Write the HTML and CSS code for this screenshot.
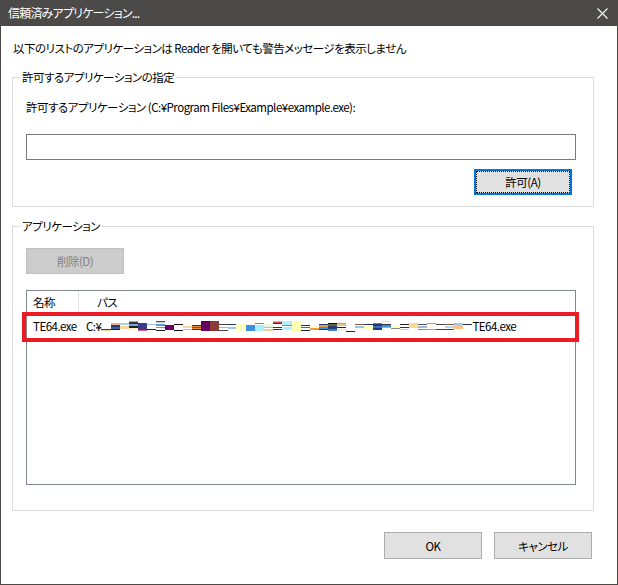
FILE: index.html
```html
<!DOCTYPE html>
<html lang="ja">
<head>
    <meta charset="UTF-8">
    <title>信頼済みアプリケーション...</title>
    <link rel="stylesheet" href="styles.css">
</head>
<body>
    <div class="window">
        <div class="titlebar">
            <span class="title">信頼済みアプリケーション...</span>
            <svg class="close" width="11" height="11" viewBox="0 0 11 11">
                <path d="M0.5 0.5 L10.5 10.5 M10.5 0.5 L0.5 10.5" stroke="#ffffff" stroke-width="1.1" fill="none"/>
            </svg>
        </div>
        <div class="content">
            <p class="intro">以下のリストのアプリケーションは Reader を開いても警告メッセージを表示しません</p>

            <fieldset class="group group-add">
                <legend>許可するアプリケーションの指定</legend>
                <label class="field-label" for="app-path">許可するアプリケーション (C:¥Program Files¥Example¥example.exe):</label>
                <input id="app-path" class="text-input" type="text">
                <div class="add-row">
                    <button class="btn btn-focus">許可(A)</button>
                </div>
            </fieldset>

            <fieldset class="group group-list">
                <legend>アプリケーション</legend>
                <button class="btn btn-disabled" disabled>削除(D)</button>
                <div class="list">
                    <div class="list-head">
                        <div class="col-name">名称</div>
                        <div class="col-path">パス</div>
                    </div>
                    <div class="list-row">
                        <div class="col-name">TE64.exe</div>
                        <div class="col-path">
                            <span>C:¥</span>
                            <svg class="garble" width="371" height="16" viewBox="0 0 371 16">
                                <rect x="0" y="11" width="10" height="1" fill="#444"/>
                                <rect x="0" y="12" width="10" height="1" fill="#e8d0a0"/>
                                <rect x="10" y="5" width="9" height="2" fill="#f4b183"/>
                                <rect x="10" y="7" width="9" height="2" fill="#1f3b7a"/>
                                <rect x="10" y="9" width="9" height="2" fill="#3a5fa0"/>
                                <rect x="10" y="11" width="9" height="1" fill="#222"/>
                                <rect x="19" y="5" width="9" height="2" fill="#9ed8e8"/>
                                <rect x="19" y="8" width="9" height="3" fill="#fcd5a0"/>
                                <rect x="28" y="3" width="9" height="1" fill="#e0a060"/>
                                <rect x="28" y="4" width="9" height="2" fill="#333"/>
                                <rect x="28" y="6" width="9" height="2" fill="#6fa8dc"/>
                                <rect x="28" y="8" width="9" height="2" fill="#222"/>
                                <rect x="28" y="10" width="9" height="2" fill="#fff0c0"/>
                                <rect x="37" y="5" width="9" height="7" fill="#3b3b8c"/>
                                <rect x="37" y="12" width="9" height="1" fill="#e06080"/>
                                <rect x="46" y="6" width="9" height="1" fill="#9ec6e8"/>
                                <rect x="46" y="11" width="9" height="1" fill="#222"/>
                                <rect x="55" y="3" width="9" height="1" fill="#4a5a2a"/>
                                <rect x="55" y="4" width="9" height="1" fill="#ccc"/>
                                <rect x="55" y="6" width="9" height="2" fill="#5b9bd5"/>
                                <rect x="55" y="9" width="9" height="1" fill="#5b9bd5"/>
                                <rect x="55" y="12" width="9" height="1" fill="#222"/>
                                <rect x="64" y="7" width="9" height="5" fill="#660066"/>
                                <rect x="73" y="6" width="9" height="1" fill="#111"/>
                                <rect x="73" y="12" width="9" height="1" fill="#111"/>
                                <rect x="82" y="8" width="9" height="2" fill="#fcd5a0"/>
                                <rect x="82" y="11" width="9" height="1" fill="#f4b183"/>
                                <rect x="91" y="7" width="9" height="1" fill="#333"/>
                                <rect x="91" y="8" width="9" height="1" fill="#e69138"/>
                                <rect x="91" y="9" width="9" height="1" fill="#7f6000"/>
                                <rect x="91" y="10" width="9" height="1" fill="#e69138"/>
                                <rect x="91" y="11" width="9" height="1" fill="#333"/>
                                <rect x="100" y="3" width="9" height="1" fill="#330066"/>
                                <rect x="100" y="4" width="9" height="9" fill="#660066"/>
                                <rect x="109" y="3" width="9" height="10" fill="#8b3a3a"/>
                                <rect x="118" y="6" width="9" height="1" fill="#444"/>
                                <rect x="118" y="9" width="9" height="1" fill="#a0b8e0"/>
                                <rect x="118" y="12" width="9" height="1" fill="#444"/>
                                <rect x="127" y="6" width="8" height="1" fill="#1f3b7a"/>
                                <rect x="127" y="9" width="8" height="2" fill="#9ec6e8"/>
                                <rect x="135" y="5" width="10" height="8" fill="#ffffc0"/>
                                <rect x="145" y="7" width="9" height="6" fill="#3d8fe0"/>
                                <rect x="154" y="5" width="9" height="1" fill="#8a8a6a"/>
                                <rect x="154" y="7" width="9" height="6" fill="#a8f0ff"/>
                                <rect x="163" y="6" width="9" height="3" fill="#e8f8e0"/>
                                <rect x="163" y="9" width="9" height="1" fill="#f4b183"/>
                                <rect x="163" y="11" width="9" height="2" fill="#f9cb9c"/>
                                <rect x="172" y="3" width="9" height="1" fill="#f4b183"/>
                                <rect x="172" y="4" width="9" height="1" fill="#c0504d"/>
                                <rect x="172" y="5" width="9" height="1" fill="#1f3b7a"/>
                                <rect x="172" y="9" width="9" height="1" fill="#333"/>
                                <rect x="172" y="11" width="9" height="1" fill="#333"/>
                                <rect x="181" y="3" width="10" height="4" fill="#b0f0ff"/>
                                <rect x="181" y="7" width="10" height="1" fill="#888"/>
                                <rect x="181" y="9" width="10" height="3" fill="#b0f0ff"/>
                                <rect x="191" y="3" width="9" height="10" fill="#ffffb0"/>
                                <rect x="200" y="7" width="9" height="1" fill="#333"/>
                                <rect x="200" y="9" width="9" height="1" fill="#666"/>
                                <rect x="200" y="12" width="9" height="1" fill="#223"/>
                                <rect x="209" y="7" width="9" height="3" fill="#fffbe0"/>
                                <rect x="209" y="10" width="9" height="2" fill="#f0a030"/>
                                <rect x="218" y="6" width="9" height="1" fill="#1f3b7a"/>
                                <rect x="218" y="7" width="9" height="2" fill="#f0a030"/>
                                <rect x="218" y="9" width="9" height="2" fill="#3d8fe0"/>
                                <rect x="218" y="11" width="9" height="1" fill="#1f3b7a"/>
                                <rect x="227" y="5" width="9" height="1" fill="#111"/>
                                <rect x="227" y="6" width="9" height="2" fill="#5b6b2b"/>
                                <rect x="227" y="8" width="9" height="3" fill="#1f3b7a"/>
                                <rect x="227" y="11" width="9" height="2" fill="#4a7ac0"/>
                                <rect x="236" y="5" width="9" height="1" fill="#d0a060"/>
                                <rect x="236" y="6" width="9" height="2" fill="#e0c890"/>
                                <rect x="236" y="9" width="9" height="1" fill="#222"/>
                                <rect x="236" y="11" width="9" height="1" fill="#f0e0b0"/>
                                <rect x="245" y="13" width="9" height="1" fill="#222"/>
                                <rect x="254" y="6" width="9" height="1" fill="#8b5a3a"/>
                                <rect x="254" y="8" width="9" height="2" fill="#9ec6e8"/>
                                <rect x="254" y="11" width="9" height="1" fill="#fffbe0"/>
                                <rect x="263" y="6" width="9" height="1" fill="#1f2f5a"/>
                                <rect x="263" y="8" width="9" height="3" fill="#ffffc0"/>
                                <rect x="272" y="5" width="9" height="1" fill="#a08040"/>
                                <rect x="272" y="6" width="9" height="2" fill="#1f3b7a"/>
                                <rect x="272" y="8" width="9" height="2" fill="#3d6fb0"/>
                                <rect x="272" y="10" width="9" height="2" fill="#1f3b7a"/>
                                <rect x="281" y="3" width="9" height="1" fill="#b0f0ff"/>
                                <rect x="281" y="6" width="9" height="1" fill="#333"/>
                                <rect x="281" y="7" width="9" height="2" fill="#3d8fe0"/>
                                <rect x="281" y="9" width="9" height="1" fill="#f0a030"/>
                                <rect x="290" y="7" width="9" height="3" fill="#ffffc0"/>
                                <rect x="290" y="10" width="9" height="1" fill="#888"/>
                                <rect x="299" y="6" width="9" height="1" fill="#222"/>
                                <rect x="299" y="9" width="9" height="1" fill="#333"/>
                                <rect x="299" y="11" width="9" height="1" fill="#ccc"/>
                                <rect x="308" y="5" width="9" height="5" fill="#ffd890"/>
                                <rect x="317" y="6" width="9" height="1" fill="#555"/>
                                <rect x="317" y="8" width="9" height="2" fill="#a0b8e0"/>
                                <rect x="317" y="11" width="9" height="1" fill="#888"/>
                                <rect x="326" y="5" width="9" height="1" fill="#e69138"/>
                                <rect x="326" y="7" width="9" height="3" fill="#fffbe0"/>
                                <rect x="326" y="11" width="9" height="1" fill="#e69138"/>
                                <rect x="335" y="6" width="9" height="1" fill="#444"/>
                                <rect x="335" y="11" width="9" height="1" fill="#444"/>
                                <rect x="344" y="6" width="9" height="1" fill="#8b5a3a"/>
                                <rect x="344" y="8" width="9" height="2" fill="#b0d8f0"/>
                                <rect x="344" y="11" width="9" height="1" fill="#444"/>
                                <rect x="353" y="5" width="9" height="2" fill="#9ec6e8"/>
                                <rect x="353" y="7" width="9" height="4" fill="#ffc080"/>
                                <rect x="362" y="6" width="9" height="1" fill="#1f2f5a"/>
                            </svg>
                            <span>TE64.exe</span>
                        </div>
                    </div>
                    <div class="highlight"></div>
                </div>
            </fieldset>

            <div class="footer">
                <button class="btn">OK</button>
                <button class="btn">キャンセル</button>
            </div>
        </div>
    </div>
</body>
</html>
```

FILE: styles.css
```css
body {
    margin: 0;
    font-family: "Noto Sans CJK JP", "Noto Sans", sans-serif;
    font-size: 11.5px;
    letter-spacing: -0.5px;
    font-feature-settings: "palt" 1;
    color: #000;
    background: #fff;
}

.window {
    width: 618px;
    height: 585px;
    box-sizing: border-box;
    border: 1px solid #4b4a48;
    border-top: none;
    background: #fff;
}

.titlebar {
    height: 26px;
    margin: 0 -1px;
    background: #4b4a48;
    color: #fff;
    display: flex;
    align-items: center;
    justify-content: space-between;
    padding: 0 10px 0 8px;
}

.title {
    font-size: 12px;
    letter-spacing: -0.8px;
    line-height: 26px;
}

.content {
    padding: 0 23px 0 11px;
}

.intro {
    margin: 14px 0 0 1px;
    line-height: 16px;
}

.group {
    margin: 0;
    border: 1px solid #dcdcdc;
    padding: 14px 17px 11px 13px;
    min-inline-size: 0;
}

.group legend {
    margin-left: -6px;
    padding: 0 2px;
    line-height: 16px;
}

.group-add {
    margin-top: 13px;
}

.group-list {
    margin-top: 11px;
    padding-bottom: 25px;
}

.field-label {
    display: block;
    line-height: 16px;
}

.text-input {
    display: block;
    width: 100%;
    height: 26px;
    box-sizing: border-box;
    margin: 19px 0 0;
    border: 1px solid #7a7a7a;
    background: #fff;
    font: inherit;
    outline: none;
}

.add-row {
    display: flex;
    justify-content: flex-end;
    margin-top: 9px;
    padding-right: 4px;
}

.btn {
    width: 98px;
    height: 26px;
    box-sizing: border-box;
    border: 1px solid #adadad;
    background: #e1e1e1;
    font: inherit;
    letter-spacing: inherit;
    color: #000;
    padding: 0;
}

.btn-focus {
    border: 2px solid #0078d7;
    outline: 1px dotted #000;
    outline-offset: -3px;
}

.btn-disabled {
    display: block;
    background: #cccccc;
    border-color: #bfbfbf;
    color: #838383;
}

.list {
    position: relative;
    margin-top: 16px;
    height: 195px;
    box-sizing: border-box;
    border: 1px solid #828790;
    background: #fff;
}

.list-head {
    display: flex;
    height: 22px;
    line-height: 22px;
}

.list-head .col-name {
    width: 52px;
    box-sizing: border-box;
    padding-left: 6px;
    border-right: 1px solid #e5e5e5;
}

.list-head .col-path {
    padding-left: 18px;
}

.list-row {
    display: flex;
    height: 26px;
    line-height: 26px;
}

.list-row .col-name {
    width: 53px;
    box-sizing: border-box;
    padding-left: 6px;
    white-space: nowrap;
}

.list-row .col-path {
    display: flex;
    align-items: center;
    padding-left: 6px;
    white-space: nowrap;
}

.garble {
    display: block;
    flex: none;
}

/* annotation drawn over the list */
.highlight {
    position: absolute;
    left: -5px;
    top: 21px;
    width: 557px;
    height: 30px;
    box-sizing: border-box;
    border: 4px solid #ed1c24;
}

.footer {
    display: flex;
    justify-content: flex-end;
    gap: 12px;
    margin-top: 21px;
    padding-right: 2px;
}

.footer .btn {
    height: 27px;
}
```
